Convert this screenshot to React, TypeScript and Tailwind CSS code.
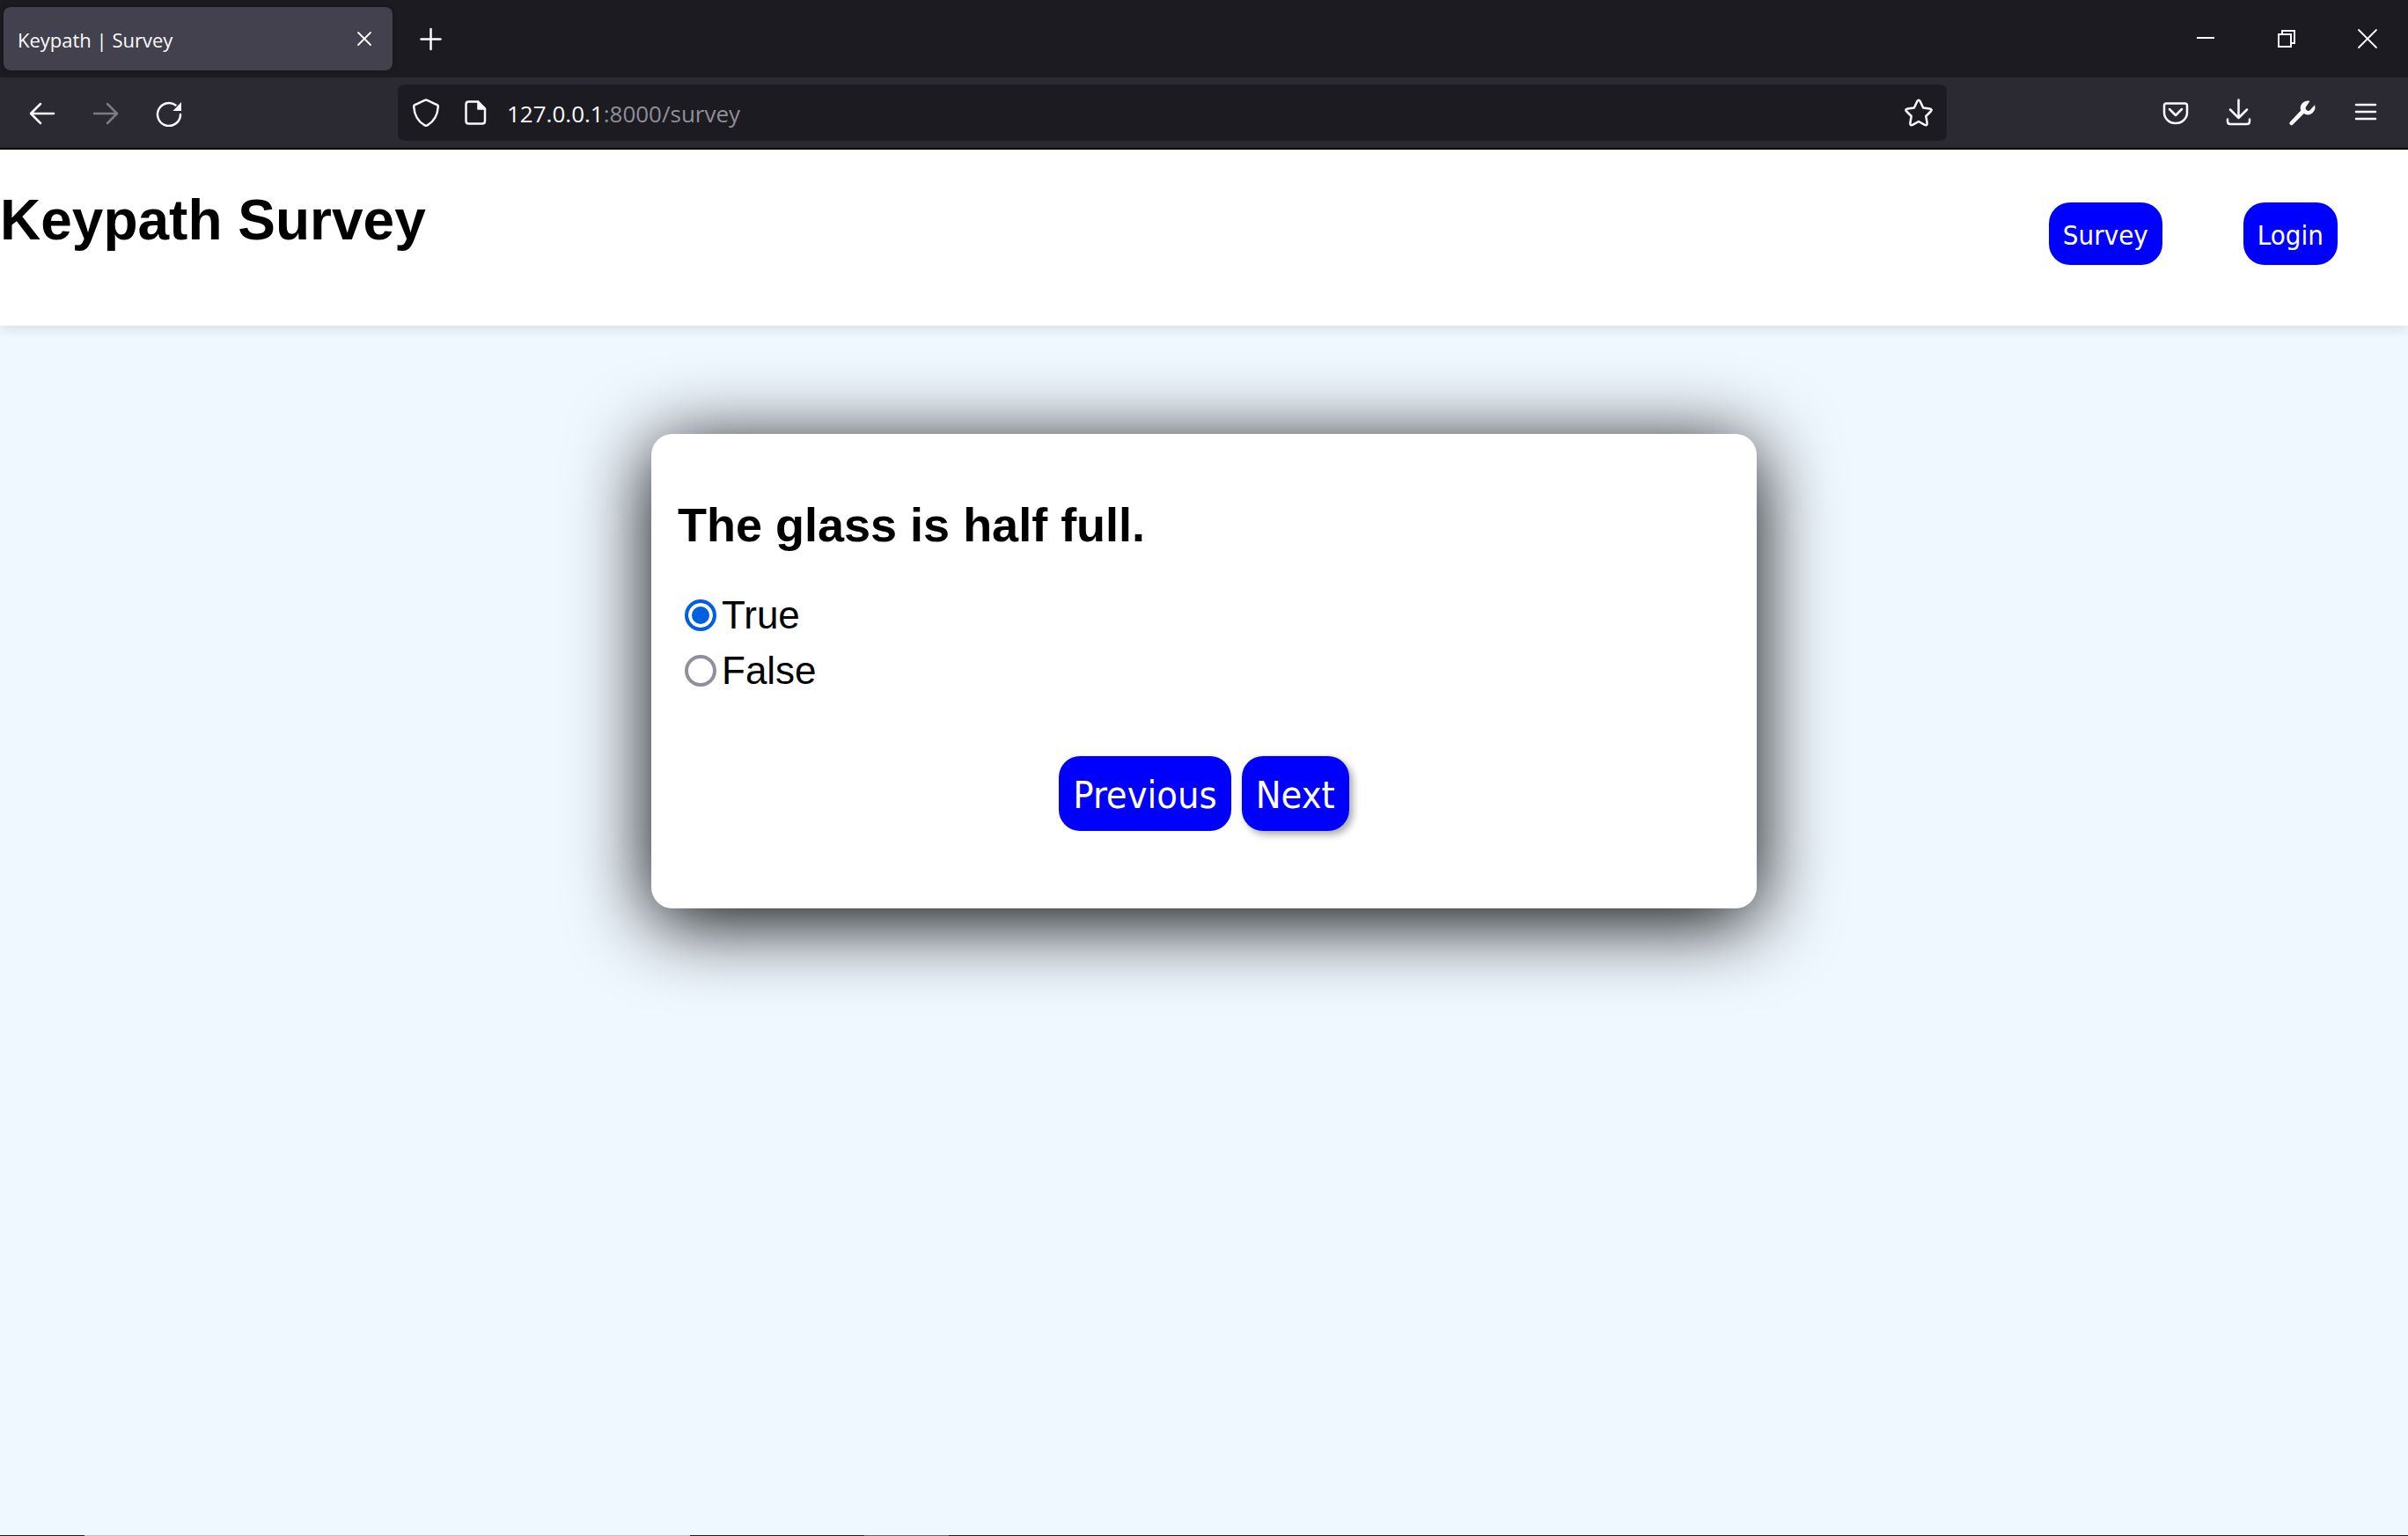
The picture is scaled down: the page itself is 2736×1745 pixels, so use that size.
import React, { useState } from "react";

const CHROME_FONT = "font-['Open_Sans','Noto_Sans',sans-serif]";
const BUTTON_FONT = "font-['DejaVu_Sans_Condensed','Noto_Sans',sans-serif]";
const PILL = "rounded-3xl bg-[#0000ff] px-4 pt-[18px] pb-[14px]";

type IconProps = { children: React.ReactNode; className?: string };

function Icon({ children, className = "" }: IconProps) {
  return (
    <svg
      viewBox="0 0 32 32"
      className={`size-8 shrink-0 ${className}`}
      fill="none"
      stroke="currentColor"
      strokeWidth="2.5"
      strokeLinecap="round"
      strokeLinejoin="round"
      aria-hidden="true"
    >
      {children}
    </svg>
  );
}

function TabStrip() {
  return (
    <div className="flex h-[88px] items-center bg-[#1c1b22] pl-1">
      <div className="flex h-[72px] w-[442px] items-center justify-between rounded-lg bg-[#42414d] pr-4 pl-4 shadow-[0_0_4px_rgba(0,0,0,0.4)]">
        <span className="pt-[2px] text-[22px]">Keypath | Survey</span>
        <button aria-label="Close tab">
          <Icon>
            <path d="M9 9l14 14M23 9l-14 14" strokeWidth="1.8" />
          </Icon>
        </button>
      </div>
      <button aria-label="New tab" className="ml-7">
        <Icon>
          <path d="M15.500 5v23M4.500 16.500h22" />
        </Icon>
      </button>
      <div className="ml-auto flex gap-[60px] pr-[30px]">
        <button aria-label="Minimize">
          <Icon>
            <path d="M6 15h20" strokeWidth="2" strokeLinecap="butt" />
          </Icon>
        </button>
        <button aria-label="Restore">
          <Icon>
            <path
              d="M7 11h14v14h-14zM11 11v-4h14v14h-4"
              strokeWidth="2"
              strokeLinecap="butt"
              strokeLinejoin="miter"
            />
          </Icon>
        </button>
        <button aria-label="Close window">
          <Icon>
            <path d="M6 6l20 20M26 6l-20 20" strokeWidth="1.8" />
          </Icon>
        </button>
      </div>
    </div>
  );
}

function Toolbar() {
  return (
    <div className="flex h-[82px] items-center border-b-2 border-[#0c0c0d] bg-[#2b2a33]">
      <div className="flex w-[452px] gap-10 pl-8">
        <button aria-label="Back">
          <Icon>
            <path d="M29 17h-26M14 6l-11 11l11 11" />
          </Icon>
        </button>
        <button aria-label="Forward" disabled className="text-[#7c7b82]">
          <Icon>
            <path d="M3 17h26M18 6l11 11l-11 11" />
          </Icon>
        </button>
        <button aria-label="Reload">
          <Icon>
            <path d="M29 18a13 13 0 1 1-5.500-10.600" />
            <path d="M30 4v10h-9.500z" fill="currentColor" stroke="none" />
          </Icon>
        </button>
      </div>
      <div className="flex h-16 flex-1 items-center rounded-lg bg-[#1c1b22] pr-4 pl-4">
        <button aria-label="Tracking protection">
          <Icon>
            <path d="M16 1.500c1 0 10 4.500 12.500 5.500c1 .4 1.400 1 1.300 2c-.6 10.500-4.500 17-12.300 21.300c-1 .6-2 .6-3 0c-7.800-4.300-11.700-10.800-12.300-21.300c-.1-1 .3-1.600 1.300-2c2.500-1 11.500-5.500 12.500-5.500z" />
          </Icon>
        </button>
        <button aria-label="Site information" className="ml-6">
          <Icon>
            <path d="M19 3.500h-10.500q-3 0-3 3v19q0 3 3 3h15.500q3 0 3-3v-14z" />
            <path d="M19 3v9h8.500z" fill="currentColor" strokeWidth="1.500" />
          </Icon>
        </button>
        <div className="ml-5 pt-[2px] text-[26px]">
          127.0.0.1<span className="text-[#8f8f96]">:8000/survey</span>
        </div>
        <button aria-label="Bookmark this page" className="ml-auto">
          <Icon>
            <path d="M14.300 3.200q1.700-3 3.400 0l3.500 7.300l7.300 1q3.300.6 1.300 3l-5.500 5.500l1.300 7.800q.3 3.300-2.700 2l-6.900-3.800l-6.900 3.800q-3 1.300-2.700-2l1.300-7.800l-5.500-5.500q-2-2.400 1.300-3l7.300-1z" />
          </Icon>
        </button>
      </div>
      <div className="flex w-[524px] justify-end gap-10 pr-8">
        <button aria-label="Save to Pocket">
          <Icon>
            <path d="M5.500 5.500h21q2.500 0 2.500 2.500v8a13 12 0 0 1-26 0v-8q0-2.500 2.500-2.500z" />
            <path d="M9 12l7 7l7-7" />
          </Icon>
        </button>
        <button aria-label="Downloads">
          <Icon>
            <path d="M15.500 1.500v20M6 12.500l9.500 9.500l9.500-9.500M3 23.500v2.500q0 3 3 3h19q3 0 3-3v-2.500" />
          </Icon>
        </button>
        <button aria-label="Developer tools">
          <Icon>
            <path
              d="M24.500 2.800a8.400 8.400 0 0 0-10.300 10.800l-12.200 12.800a2.200 2.200 0 0 0 3.200 3.200l12.500-12.500a8.400 8.400 0 0 0 12.300-9.800l-5 5.500a3 3 0 0 1-4.500-4z"
              fill="currentColor"
              stroke="none"
            />
          </Icon>
        </button>
        <button aria-label="Open menu">
          <Icon>
            <path d="M5 7h22M5 15h22M5 23h22" />
          </Icon>
        </button>
      </div>
    </div>
  );
}

function SiteHeader() {
  return (
    <header className="flex h-[200px] items-start justify-between bg-white pt-11 pr-20 shadow-[0_4px_12px_rgba(0,0,0,0.1)]">
      <h1 className="text-[64px] leading-[72px] font-bold">Keypath Survey</h1>
      <nav className={`mt-4 flex gap-[92px] text-[31px] leading-[39px] text-white ${BUTTON_FONT}`}>
        <a href="#survey" className={PILL}>
          Survey
        </a>
        <a href="#login" className={PILL}>
          Login
        </a>
      </nav>
    </header>
  );
}

type ChoiceProps = { label: string; checked: boolean; onSelect: () => void };

function Choice({ label, checked, onSelect }: ChoiceProps) {
  return (
    <label className="flex items-center gap-[6px]">
      <input
        type="radio"
        name="answer"
        checked={checked}
        onChange={onSelect}
        className="ml-2 size-9 appearance-none rounded-full border-4 border-[#8f8f9d] bg-white checked:border-[#0060df] checked:bg-[#0060df] checked:shadow-[inset_0_0_0_4px_white]"
      />
      {label}
    </label>
  );
}

function QuestionCard() {
  const [answer, setAnswer] = useState("True");
  return (
    <form
      onSubmit={(event) => event.preventDefault()}
      className="mx-auto w-full max-w-[1256px] rounded-3xl bg-white px-[30px] pt-[72px] pb-[88px] text-[44px] leading-[63px] shadow-[0_14px_90px_black]"
    >
      <fieldset>
        <legend className="text-[54px] leading-[62px] font-bold">The glass is half full.</legend>
        <div className="mt-10">
          {["True", "False"].map((label) => (
            <Choice
              key={label}
              label={label}
              checked={answer === label}
              onSelect={() => setAnswer(label)}
            />
          ))}
        </div>
      </fieldset>
      <div className={`mt-[66px] flex justify-center gap-3 text-[43px] leading-[53px] text-white ${BUTTON_FONT}`}>
        <button type="button" className={PILL}>
          Previous
        </button>
        <button type="submit" className={`${PILL} shadow-[4px_4px_8px_rgba(0,0,0,0.35)]`}>
          Next
        </button>
      </div>
    </form>
  );
}

export default function App() {
  return (
    <div className="flex min-h-screen flex-col bg-[#f0f8ff] font-['Liberation_Sans',Arial,sans-serif] text-black">
      <div className={`text-[#fbfbfe] ${CHROME_FONT}`}>
        <TabStrip />
        <Toolbar />
      </div>
      <SiteHeader />
      <main className="flex-1 pt-[123px]">
        <QuestionCard />
      </main>
      <div className="flex h-px bg-[#26181f]">
        <div className="ml-24 w-[688px] bg-[#bfbfc4]" />
        <div className="ml-[198px] w-24 bg-[#666666]" />
      </div>
    </div>
  );
}
